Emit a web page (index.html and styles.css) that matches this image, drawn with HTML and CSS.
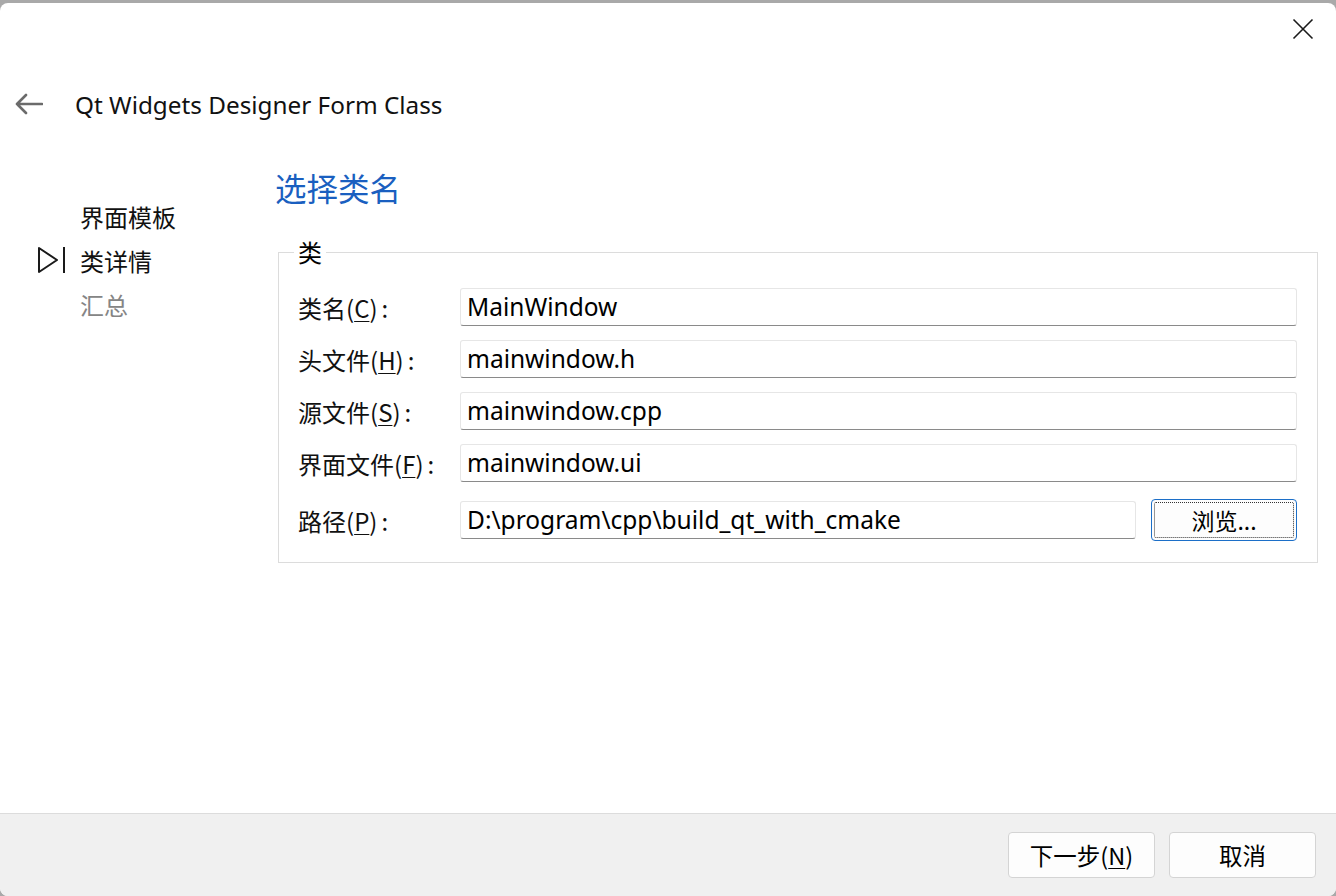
FILE: index.html
```html
<!DOCTYPE html>
<html lang="zh-CN">
<head>
<meta charset="utf-8">
<title>Qt Widgets Designer Form Class</title>
<link rel="stylesheet" href="styles.css">
</head>
<body>
<div class="window">
  <div class="titlebar">
    <svg class="close" width="22" height="22" viewBox="0 0 22 22"><path d="M1.5 1.5 L20.5 20.5 M20.5 1.5 L1.5 20.5" stroke="#1a1a1a" stroke-width="1.6" fill="none"/></svg>
  </div>
  <div class="header">
    <svg class="back" width="28" height="22" viewBox="0 0 28 22"><path d="M2 11 H27 M11 2 L2 11 L11 20" stroke="#6b6b6b" stroke-width="2.6" fill="none" stroke-linecap="round" stroke-linejoin="round"/></svg>
    <span class="title">Qt Widgets Designer Form Class</span>
  </div>
  <div class="content">
    <div class="sidebar">
      <div class="step"><span class="marker"></span><span>界面模板</span></div>
      <div class="step"><span class="marker"><svg width="30" height="30" viewBox="0 0 30 30"><path d="M3 3 L21 15 L3 27 Z" stroke="#1a1a1a" stroke-width="2" fill="none" stroke-linejoin="round"/><path d="M28 2 V28" stroke="#1a1a1a" stroke-width="2"/></svg></span><span>类详情</span></div>
      <div class="step disabled"><span class="marker"></span><span>汇总</span></div>
    </div>
    <div class="main">
      <h1 class="heading">选择类名</h1>
      <fieldset class="group">
        <legend>类</legend>
        <div class="row"><label>类名(<u>C</u>)<span class="colon">:</span></label><div class="input">MainWindow</div></div>
        <div class="row"><label>头文件(<u>H</u>)<span class="colon">:</span></label><div class="input">mainwindow.h</div></div>
        <div class="row"><label>源文件(<u>S</u>)<span class="colon">:</span></label><div class="input">mainwindow.cpp</div></div>
        <div class="row"><label>界面文件(<u>F</u>)<span class="colon">:</span></label><div class="input">mainwindow.ui</div></div>
        <div class="row last"><label>路径(<u>P</u>)<span class="colon">:</span></label><div class="input">D:\program\cpp\build_qt_with_cmake</div><button class="browse"><span class="focus">浏览...</span></button></div>
      </fieldset>
    </div>
  </div>
  <div class="footer">
    <button class="btn">下一步(<u>N</u>)</button>
    <button class="btn">取消</button>
  </div>
</div>
</body>
</html>
```
FILE: styles.css
```css
* { box-sizing: border-box; }
html, body { margin: 0; padding: 0; }
body {
  background: #a9a9a9;
  width: 1336px;
  height: 896px;
  overflow: hidden;
  font-family: "Noto Sans", "Noto Sans CJK SC", sans-serif;
  color: #000;
  padding-top: 3px;
}
.window {
  height: 893px;
  background: #fff;
  border-radius: 8px;
  display: flex;
  flex-direction: column;
  overflow: hidden;
}
.titlebar {
  height: 52px;
  display: flex;
  justify-content: flex-end;
  align-items: center;
  padding-right: 22px;
  flex: none;
}
.close { display: block; }
.header {
  height: 98px;
  display: flex;
  align-items: center;
  padding-left: 15px;
  flex: none;
}
.back { display: block; margin-right: 32px; }
.title {
  font-size: 24.3px;
  color: #111;
}
.content {
  flex: 1;
  display: flex;
  min-height: 0;
}
.sidebar {
  width: 275px;
  flex: none;
  padding-top: 41px;
}
.step {
  height: 44px;
  display: flex;
  align-items: center;
  font-family: "Noto Sans CJK SC", sans-serif;
  font-size: 24px;
  color: #111;
}
.step.disabled { color: #858585; }
.marker {
  width: 80px;
  padding-left: 36px;
  display: flex;
  align-items: center;
}
.marker svg { display: block; }
.main {
  flex: 1;
  padding-right: 18px;
}
.heading {
  margin: 14px 0 0 0;
  height: 40px;
  line-height: 40px;
  font-family: "Noto Sans CJK SC", sans-serif;
  font-weight: 400;
  font-size: 31.5px;
  color: #1a5fc0;
}
.group {
  margin: 30px 0 0 3px;
  border: 1px solid #dcdcdc;
  padding: 21px 20px 21px 19px;
}
.group legend {
  font-family: "Noto Sans CJK SC", sans-serif;
  font-size: 24px;
  padding: 0 4px;
  margin-left: -4px;
  line-height: 30px;
}
.row {
  display: flex;
  align-items: center;
  height: 38px;
  margin-bottom: 14px;
}
.row.last {
  height: 42px;
  margin-top: 17px;
  margin-bottom: 0;
}
.row label {
  width: 162px;
  flex: none;
  font-family: "Noto Sans CJK SC", sans-serif;
  font-size: 24px;
  color: #111;
}
.colon { margin-left: 4px; }
.input {
  flex: 1;
  height: 38px;
  border: 1px solid #e6e6e6;
  border-bottom: 1px solid #8a8a8a;
  border-radius: 3px;
  padding-left: 6px;
  font-size: 24.5px;
  line-height: 36px;
  color: #000;
  white-space: nowrap;
}
.browse {
  flex: none;
  width: 146px;
  height: 42px;
  margin-left: 15px;
  border: 1px solid #1c6fc8;
  border-radius: 4px;
  background: #fdfdfd;
  padding: 2px;
  font-family: "Noto Sans CJK SC", sans-serif;
  font-size: 23px;
  color: #000;
}
.browse .focus {
  display: flex;
  align-items: center;
  justify-content: center;
  height: 100%;
  width: 100%;
  border: 1px dotted #333;
  border-radius: 2px;
}
.footer {
  height: 83px;
  flex: none;
  background: #f0f0f0;
  border-top: 1px solid #dcdcdc;
  display: flex;
  justify-content: flex-end;
  align-items: flex-start;
  padding-top: 18px;
  padding-right: 20px;
  gap: 14px;
}
.btn {
  width: 147px;
  height: 46px;
  background: #fdfdfd;
  border: 1px solid #d4d4d4;
  border-radius: 4px;
  font-family: "Noto Sans CJK SC", sans-serif;
  font-size: 23.5px;
  color: #000;
  padding: 0;
}
u { text-decoration-thickness: 1px; text-underline-offset: 3px; }
```
